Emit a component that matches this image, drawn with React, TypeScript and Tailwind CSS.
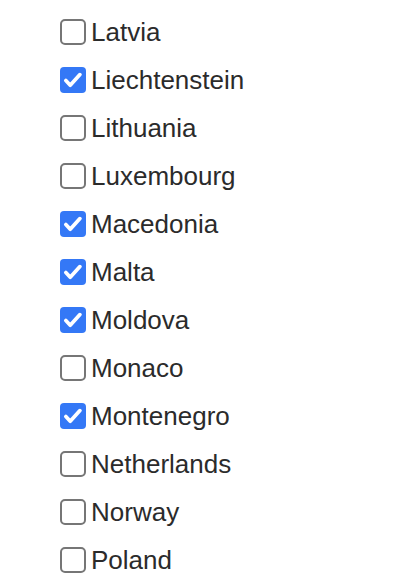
import { useState } from "react";

const COUNTRIES: { name: string; checked: boolean }[] = [
  { name: "Latvia", checked: false },
  { name: "Liechtenstein", checked: true },
  { name: "Lithuania", checked: false },
  { name: "Luxembourg", checked: false },
  { name: "Macedonia", checked: true },
  { name: "Malta", checked: true },
  { name: "Moldova", checked: true },
  { name: "Monaco", checked: false },
  { name: "Montenegro", checked: true },
  { name: "Netherlands", checked: false },
  { name: "Norway", checked: false },
  { name: "Poland", checked: false },
];

function Box({ checked }: { checked: boolean }) {
  if (checked) {
    return (
      <span className="flex h-[26px] w-[26px] shrink-0 items-center justify-center rounded-[4px] bg-[#3478f6]">
        <svg width="22" height="22" viewBox="0 0 20 20" fill="none">
          <path d="M3.5 10.5l4 4.2 8.8-9.6" stroke="white" strokeWidth="3.4" strokeLinecap="round" strokeLinejoin="round" />
        </svg>
      </span>
    );
  }
  return <span className="h-[26px] w-[26px] shrink-0 rounded-[5px] border-2 border-[#767676] bg-white" />;
}

export default function App() {
  const [items, setItems] = useState(COUNTRIES);

  const toggle = (name: string) =>
    setItems(prev => prev.map(c => (c.name === name ? { ...c, checked: !c.checked } : c)));

  return (
    <div className="min-h-[584px] bg-white pt-2 pl-[60px] font-['Liberation_Sans',Arial,sans-serif] text-[#2b2b2b]">
      {items.map(c => (
        <label
          key={c.name}
          className="flex h-12 cursor-pointer items-center gap-[5px] text-[26px]"
          onClick={() => toggle(c.name)}
        >
          <Box checked={c.checked} />
          <span>{c.name}</span>
        </label>
      ))}
    </div>
  );
}
